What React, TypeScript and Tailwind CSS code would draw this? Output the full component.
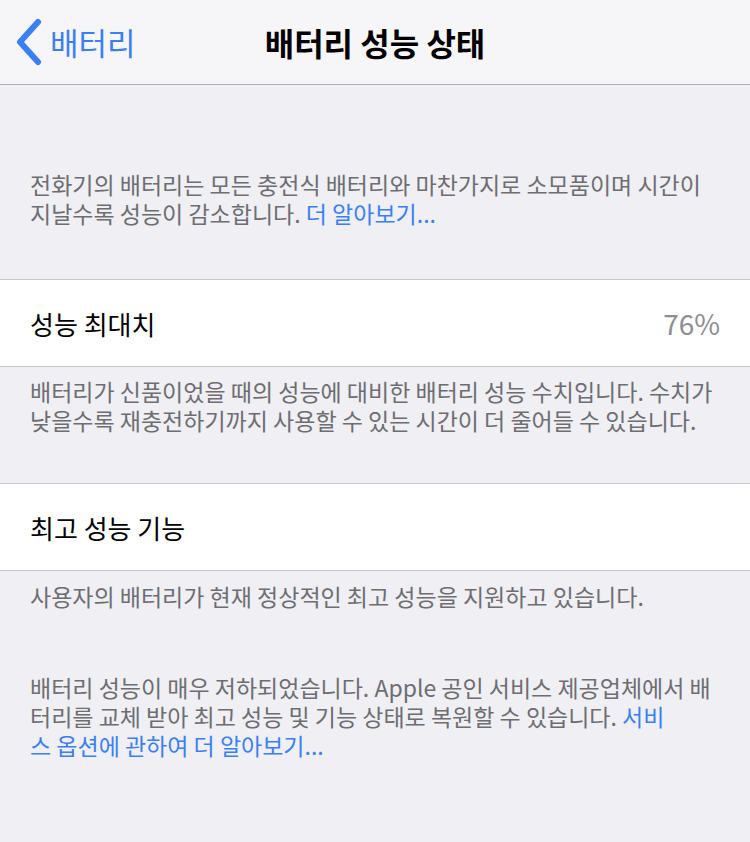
import React from 'react';

const FONT = '"Noto Sans CJK KR", "Noto Sans", sans-serif';

const BackChevron = () => (
  <svg width="30" height="48" viewBox="0 0 30 48" className="shrink-0">
    <path d="M24 4 L6 24 L24 44" fill="none" stroke="#3a7ff6" strokeWidth="6" strokeLinecap="round" strokeLinejoin="round" />
  </svg>
);

const Cell: React.FC<{ label: string; value?: string }> = ({ label, value }) => (
  <div className="flex items-center justify-between h-[88px] bg-white border-y border-[#c8c7cc] pl-[30px] pr-[30px]">
    <span className="text-[26px] text-black">{label}</span>
    {value && <span className="text-[28px] text-[#8e8e93]">{value}</span>}
  </div>
);

export default function App() {
  return (
    <div className="w-[750px] h-[842px] bg-[#efeff4] overflow-hidden" style={{ fontFamily: FONT }}>
      {/* Nav bar */}
      <div className="relative flex items-center h-[85px] bg-[#f6f6f8] border-b border-[#b2b2b2]">
        <div className="flex items-center gap-[6px] pl-[14px] text-[#3a7ff6] text-[31px]">
          <BackChevron />
          <span>배터리</span>
        </div>
        <div className="absolute inset-0 flex items-center justify-center pointer-events-none">
          <span className="text-[32px] font-bold text-black">배터리 성능 상태</span>
        </div>
      </div>

      {/* Intro */}
      <div className="pt-[85px] pb-[51px] px-[30px] text-[23px] leading-[29px] text-[#6d6d72]">
        전화기의 배터리는 모든 충전식 배터리와 마찬가지로 소모품이며 시간이
        <br />
        지날수록 성능이 감소합니다. <span className="text-[#3a7ff6]">더 알아보기...</span>
      </div>

      <Cell label="성능 최대치" value="76%" />

      <div className="pt-[10px] pb-[48px] px-[30px] text-[23px] leading-[29px] text-[#6d6d72]">
        배터리가 신품이었을 때의 성능에 대비한 배터리 성능 수치입니다. 수치가
        <br />
        낮을수록 재충전하기까지 사용할 수 있는 시간이 더 줄어들 수 있습니다.
      </div>

      <Cell label="최고 성능 기능" />

      <div className="pt-[11px] px-[30px] text-[23px] leading-[29px] text-[#6d6d72]">
        사용자의 배터리가 현재 정상적인 최고 성능을 지원하고 있습니다.
      </div>

      <div className="pt-[62px] px-[30px] text-[23px] leading-[29px] text-[#6d6d72]">
        배터리 성능이 매우 저하되었습니다. Apple 공인 서비스 제공업체에서 배
        <br />
        터리를 교체 받아 최고 성능 및 기능 상태로 복원할 수 있습니다.{' '}
        <span className="text-[#3a7ff6]">서비</span>
        <br />
        <span className="text-[#3a7ff6]">스 옵션에 관하여 더 알아보기...</span>
      </div>
    </div>
  );
}
